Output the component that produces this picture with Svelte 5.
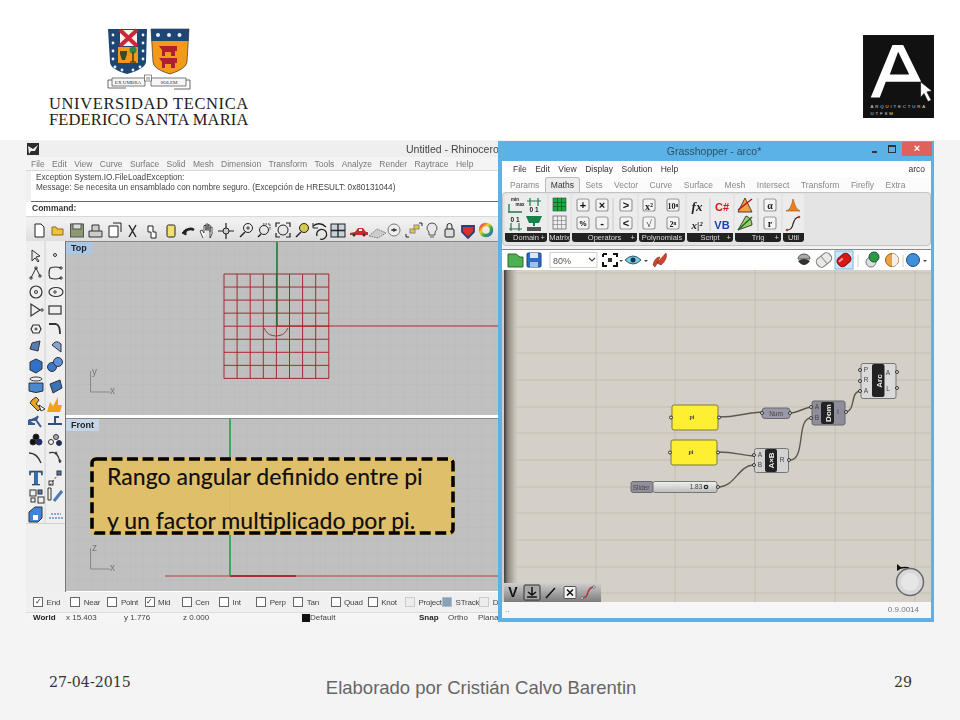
<script>
  const rhinoMenu = ["File", "Edit", "View", "Curve", "Surface", "Solid", "Mesh", "Dimension", "Transform", "Tools", "Analyze", "Render", "Raytrace", "Help"];
  const osnaps = [
    { name: "End", on: true }, { name: "Near" }, { name: "Point" }, { name: "Mid", on: true },
    { name: "Cen" }, { name: "Int" }, { name: "Perp" }, { name: "Tan" }, { name: "Quad" },
    { name: "Knot" }, { name: "Project", flat: true }, { name: "STrack", flat: true, fill: true }, { name: "Disable", flat: true },
  ];
  const ghMenu = ["File", "Edit", "View", "Display", "Solution", "Help"];
  const ghTabs = ["Params", "Maths", "Sets", "Vector", "Curve", "Surface", "Mesh", "Intersect", "Transform", "Firefly", "Extra"];
  const redCells = [0, 1, 2, 3, 4, 5, 6, 7, 8];
  const gridX = [516, 596, 675, 755, 835, 915];
  const gridY = [273, 300, 327, 353, 380, 407, 433, 460, 487, 513, 540, 567, 593];
  const dots = [[113, 35], [113, 43], [113, 51], [113, 59], [115, 67], [122, 70], [133, 70], [140, 67], [143, 59], [143, 51], [143, 43], [143, 35]];
</script>

<div class="page">
  <header class="top">
    <div class="utfsm">
      <svg class="crest" viewBox="105 27 88 64" width="88" height="64">
        <path d="M108 29H147L146 62Q145 69 127 74Q110 69 110 62Z" fill="#1d4674" />
        <path d="M120 30H137V46H120Z" fill="#f6f2ee" />
        <path d="M120 30L137 46M137 30L120 46" stroke="#c8283a" stroke-width="4" />
        <path d="M118 47H138V63H118Z" fill="#ef9a1e" />
        <path d="M120 51H127V54L125 60H122L120 54Z" fill="#3c4a2a" />
        <circle cx="133" cy="50" r="3.5" fill="#2b8a4a" />
        <path d="M133 52V62M130 62H136" stroke="#222" stroke-width="1.2" />
        {#each dots as d}
          <circle cx={d[0]} cy={d[1]} r="1.4" fill="#eef2f5" />
        {/each}
        <path d="M151 29H189L187 62Q186 69 170 74Q153 69 153 62Z" fill="#f29a1c" stroke="#222" stroke-width=".6" />
        <path d="M151 29H189L188.5 41H151.5Z" fill="#1d4674" />
        <circle cx="158" cy="35" r="2" fill="#eef2f5" /><circle cx="169" cy="35" r="2" fill="#eef2f5" /><circle cx="179.500" cy="35" r="2" fill="#eef2f5" />
        <path d="M159 46H177V51H175V56H171V52H165V56H162V50Z" fill="#b0202c" />
        <path d="M159 58H177V63H175V68H171V64H165V68H162V62Z" fill="#b0202c" />
        <path d="M112 78H145V86H112ZM151 78H186V86H151Z" fill="#f7f7f7" stroke="#444" stroke-width=".7" />
        <path d="M112 80H108V88H126M186 80H190V89H174" fill="none" stroke="#444" stroke-width=".8" />
        <rect x="144.500" y="75" width="7" height="6" fill="#fff" stroke="#444" stroke-width=".6" />
        <text x="128" y="83.500" class="motto">EX UMBRA</text>
        <text x="148" y="80" class="motto small">IN</text>
        <text x="169" y="83.500" class="motto">SOLEM</text>
      </svg>
      <div class="name">UNIVERSIDAD TECNICA</div>
      <div class="name second">FEDERICO SANTA MARIA</div>
    </div>
    <svg class="arq" viewBox="40 45 212 248" width="71" height="83">
      <rect x="40" y="45" width="212" height="248" fill="#111" />
      <path fill-rule="evenodd" d="M128 75H160L214 185H108L90 232H63ZM145 95L120 163H178Z" fill="#fff" />
      <path d="M212 185L246 212L231 215L244 240L234 244L222 220L212 232Z" fill="#fff" stroke="#111" stroke-width="2" />
      <text x="62" y="262" class="arqtext">ARQUITECTURA</text>
      <text x="62" y="285" class="arqtext">UTFSM</text>
    </svg>
  </header>

  <main class="stage">
    <section class="rhino">
      <div class="r-title">
        <svg width="12" height="12" viewBox="0 0 12 12" class="r-logo">
          <rect width="12" height="12" fill="#2c2c2c" />
          <path d="M1 3L6 6L11 2L8 8L4 8L2 11Z" fill="#eee" />
        </svg>
        <span>Untitled - Rhinoceros</span>
      </div>
      <nav class="r-menu">
        {#each rhinoMenu as item}<span>{item}</span>{/each}
      </nav>
      <div class="r-msg">
        <div>Exception System.IO.FileLoadException:</div>
        <div>Message: Se necesita un ensamblado con nombre seguro. (Excepción de HRESULT: 0x80131044)</div>
      </div>
      <div class="r-cmd">Command:</div>
      <svg class="r-tools" viewBox="26 219 472 21" width="472" height="21">
        <g fill="none" stroke="#222" stroke-width="1">
          <path d="M35 223H41L44 226V236H35Z" fill="#fff" />
          <path d="M52 234V226H56L57 228H63V234Z" fill="#f2c23c" stroke="#8a6a10" />
          <rect x="70.500" y="223" width="13" height="13" fill="#8c9a70" stroke="#555" />
          <rect x="73" y="223" width="8" height="5" fill="#ddd" stroke="#555" />
          <path d="M89 230H102V236H89ZM92 230V224H99V230" fill="#ccc" stroke="#333" />
          <path d="M109 225H118V236H109Z" fill="#fff" /><path d="M113 222H121V231" />
          <path d="M129 224L136 236M136 224L129 236" stroke-width="1.4" />
          <path d="M148 225H153V231H156V237H151V231H148Z" fill="#fff" />
          <rect x="167" y="224" width="8" height="12" rx="1.500" fill="#f1df70" />
          <path d="M184 231Q189 226 194 229" stroke-width="2.500" /><path d="M182 232L186 228V234Z" fill="#222" />
          <path d="M203 237L200 230L202 229L204 232V224.500H206V230M206 229V223H208V230M208 229V224H210V231M210 230V226H212V233L210 237Z" fill="#fff" stroke-width=".8" />
          <path d="M226 222V238M218 230H234" stroke-width="1.200" /><circle cx="226" cy="230" r="3" fill="#ccc" />
          <circle cx="248" cy="227" r="4.500" /><path d="M245 231L240 236" stroke-width="1.500" /><path d="M246 227H250M248 225V229" stroke-width=".8" />
          <circle cx="264" cy="229" r="4.500" /><path d="M261 233L258 236" stroke-width="1.500" /><path d="M263 223H270V229" stroke-dasharray="1.500 1" />
          <circle cx="283" cy="229" r="5" /><path d="M276 226V222H280M286 222H290V226M276 232V236H280M286 236H290V232" stroke-width="1.200" />
          <circle cx="304" cy="227" r="4.500" fill="#d8c84c" /><path d="M301 231L296 236" stroke-width="1.500" />
          <path d="M313 225Q320 220 326 226M320 238a5 5 0 1 0-3-3" stroke-width="1.300" /><path d="M313 222V227H318" stroke-width="1" />
          <rect x="331" y="223" width="14" height="13" fill="#c8d2dc" /><path d="M338 223V236M331 229.500H345" stroke-width="1.300" />
          <path d="M350 232L355 231L358 227H363L366 231H368V234H350Z" fill="#c82c30" stroke="none" /><rect x="359" y="228" width="3" height="2" fill="#fff" stroke="none" /><circle cx="354" cy="234" r="1.500" fill="#333" stroke="none" /><circle cx="364" cy="234" r="1.500" fill="#333" stroke="none" />
          <path d="M369 235L377 228L386 232L378 237Z" fill="#ccc" stroke="#777" stroke-dasharray="1.500 1" />
          <circle cx="394" cy="229" r="6" stroke="#777" fill="#eee" /><path d="M391 229H397" /><circle cx="394" cy="229" r="1.200" />
          <rect x="410" y="228" width="5" height="4" fill="#e8c82c" stroke="#888" /><rect x="414" y="224" width="5" height="4" fill="#e8c82c" stroke="#888" /><path d="M406 236V233M406 236H409M419 222H422V225" />
          <path d="M432 222a5 5 0 0 1 3 9v3h-6v-3a5 5 0 0 1 3-9Z" fill="#e8e8e8" stroke="#555" /><path d="M430 236H434" stroke="#555" />
          <rect x="445" y="228" width="9" height="8" rx="1" fill="#ddd" /><path d="M447 228V225a2.500 2.500 0 0 1 5 0V228" />
          <path d="M462 225H474V231L468 237L462 231Z" fill="#d6332c" stroke="#2c3e78" stroke-width="1.800" />
        </g>
        <circle cx="486" cy="229" r="5.500" fill="none" stroke="url(#wheel)" stroke-width="3.500" />
        <defs>
          <linearGradient id="wheel" x1="0" y1="0" x2="1" y2="1">
            <stop offset="0" stop-color="#e33" /><stop offset=".35" stop-color="#ec3" /><stop offset=".65" stop-color="#3a4" /><stop offset="1" stop-color="#36c" />
          </linearGradient>
        </defs>
      </svg>

      <div class="r-body">
        <svg class="r-side" viewBox="26 241 39 350" width="39" height="350">
          <path d="M45 241V523M26 523.500H65" stroke="#d2d2d2" />
          <g fill="none" stroke="#333" stroke-width="1">
            <path d="M32 250L32 261L35 258L38 262L39 261L36 257L40 256Z" fill="#e8e8e8" />
            <circle cx="55" cy="255" r="1.500" />
            <path d="M31 278L36 268L40 276" /><circle cx="31" cy="278" r="1.200" /><circle cx="36" cy="268" r="1.200" /><circle cx="40" cy="276" r="1.200" />
            <path d="M50 268Q56 266 61 268M50 268Q48 274 50 278Q55 280 61 278" stroke-width="1.200" /><circle cx="61" cy="268" r="1.200" /><circle cx="61" cy="278" r="1.200" />
            <circle cx="36" cy="292" r="6" stroke-width="1.200" /><circle cx="36" cy="292" r="1.500" />
            <ellipse cx="56" cy="292" rx="7" ry="4.500" stroke-width="1.200" /><circle cx="55" cy="292" r="1.200" />
            <path d="M31 304V316L40 310Z" stroke-width="1.200" /><circle cx="42" cy="310" r="1.200" />
            <rect x="49" y="306" width="12" height="8" stroke-width="1.200" />
            <path d="M31 329L33 325H39L41 329L39 333H33Z" stroke-width="1.200" /><circle cx="36" cy="329" r="1" />
            <path d="M49 324H56Q60 325 60 334" stroke-width="1.800" />
            <path d="M32 343L40 341L38 351L30 349Z" fill="#5a7ab8" />
            <path d="M52 345Q56 339 61 344V352L52 345Z" fill="#8aa4d8" />
            <path d="M30 362L36 359L42 362V369L36 373L30 370Z" fill="#2f72c8" />
            <circle cx="52" cy="367" r="4.500" fill="#3f78c8" /><circle cx="58" cy="362" r="4.500" fill="#5a90da" />
            <ellipse cx="36" cy="379" rx="6" ry="2" /><path d="M29 383H43V391Q36 394 29 391Z" fill="#4a88d2" />
            <path d="M50 384L60 380L62 388L53 393Z" fill="#3a72b8" />
            <path d="M32 400L36 397L39 400L36 404L41 408L38 411L30 403Z" fill="#e8a420" />
            <path d="M39 405L45 409L41 411Z" fill="#fff" />
            <path d="M47 412L50 402L53 406L58 397L58 405L62 405L60 412Z" fill="#f2a21a" stroke="none" />
            <path d="M29 420H36L38 416M36 420L41 427M29 420V424H35" fill="#3a5a8c" stroke="#3a5a8c" stroke-width="2" />
            <path d="M48 424H62M55 424V417L59 417" fill="none" stroke="#2f4f80" stroke-width="2" />
            <circle cx="36" cy="437" r="3" fill="#111" /><circle cx="33" cy="442" r="3" fill="#111" /><circle cx="39" cy="442" r="3" fill="#1c2a80" />
            <circle cx="51" cy="442" r="2.500" /><circle cx="56" cy="437" r="2.500" fill="#aab" /><circle cx="59" cy="443" r="2.500" fill="#1c2a80" />
            <path d="M29 453Q37 453 41 463" stroke-width="1.300" />
            <path d="M49 453Q58 450 60 463" stroke-width="1.300" /><circle cx="56" cy="453" r="1" /><circle cx="60" cy="461" r="1" />
            <text x="36" y="485" class="bigt">T</text>
            <path d="M50 485L60 472" stroke-dasharray="2 2" /><rect x="49" y="481" width="4" height="4" /><rect x="57" y="471" width="4" height="4" fill="#4a78b8" />
            <rect x="30" y="490" width="6" height="6" /><rect x="38" y="490" width="4" height="4" fill="#4a78b8" /><rect x="31" y="498" width="4" height="4" /><rect x="38" y="497" width="6" height="6" />
            <path d="M48 488V500H51V488Z" /><path d="M54 501L62 491" stroke="#4a78b8" stroke-width="3" />
            <path d="M29 512L35 507H42V518L38 522H29Z" fill="#3f86d8" /><path d="M33 515H38V520H33Z" fill="#fff" stroke="none" />
            <path d="M49 518H63M51 514H61" stroke="#2f5fa8" stroke-dasharray="2 1" stroke-width="1.200" />
          </g>
        </svg>

        <div class="views">
          <div class="view">
            <span class="tag">Top</span>
            <svg viewBox="66 241 432 174" width="432" height="174">
              <defs>
                <pattern id="fine" x="66" y="241" width="13" height="13" patternUnits="userSpaceOnUse">
                  <path d="M13 0V13H0" fill="none" stroke="#b6b6b6" stroke-width=".6" />
                </pattern>
              </defs>
              <rect x="66" y="241" width="432" height="174" fill="url(#fine)" />
              <g stroke="#a8282e" stroke-width="1">
                {#each redCells as n}
                  <path d="M{224 + n * 13.100} 273V377.500" />
                  <path d="M224 {273 + n * 13.050}H329" />
                {/each}
              </g>
              <path d="M264 327A13 13 0 0 0 288 327" fill="none" stroke="#a33a40" />
              <path d="M329 325H498" stroke="#b0282c" />
              <path d="M277 241V325" stroke="#0c7a30" stroke-width="1.500" />
              <path d="M277 325H329" stroke="#b81c20" stroke-width="1.200" />
              <path d="M90.500 370V391H110" fill="none" stroke="#888" />
              <text x="92" y="374" class="axis">y</text>
              <text x="110" y="393" class="axis">x</text>
            </svg>
          </div>
          <div class="view front">
            <span class="tag">Front</span>
            <svg viewBox="66 418 432 173" width="432" height="173">
              <rect x="66" y="418" width="432" height="173" fill="url(#fine)" />
              <path d="M165 575H498" stroke="#b83a3c" stroke-width="1.200" />
              <path d="M230 575H296" stroke="#a81414" stroke-width="1.400" />
              <path d="M230 418V575" stroke="#1f9a45" stroke-width="1.500" />
              <path d="M90.500 547V568H110" fill="none" stroke="#888" />
              <text x="92" y="550" class="axis">z</text>
              <text x="110" y="570" class="axis">x</text>
            </svg>
          </div>
        </div>
      </div>

      <div class="r-snap">
        {#each osnaps as s}
          <label class="snap">
            <span class="box" class:flat={s.flat} class:fill={s.fill}>{s.on ? "✓" : ""}</span>{s.name}
          </label>
        {/each}
      </div>
      <div class="r-status">
        <b class="world">World</b>
        <span class="c1">x 15.403</span>
        <span class="c2">y 1.776</span>
        <span class="c3">z 0.000</span>
        <i class="swatch"></i><span class="def">Default</span>
        <b class="snapb">Snap</b>
        <span class="ortho">Ortho</span>
        <span class="ortho">Planar</span>
      </div>

      <div class="callout">
        <svg class="dash" width="365" height="78" viewBox="0 0 365 78">
          <rect x="2" y="2" width="361" height="74" rx="4" />
        </svg>
        <p>Rango angular definido entre pi</p>
        <p>y un factor multiplicado por pi.</p>
      </div>
    </section>

    <section class="gh">
      <div class="g-title">
        <span>Grasshopper - arco*</span>
        <div class="winbtns">
          <i class="wmin"></i><i class="wmax"></i><i class="wclose">×</i>
        </div>
      </div>
      <div class="g-inner">
        <nav class="g-menu">
          {#each ghMenu as item}<span>{item}</span>{/each}
          <span class="g-doc">arco</span>
        </nav>
        <div class="g-tabs">
          {#each ghTabs as tab}<span class:active={tab === "Maths"}>{tab}</span>{/each}
        </div>
        <div class="ribbon">
          <div class="grp" style="width:42px">
            <svg viewBox="504 194 42 39" width="42" height="39" class="ic">
              <text x="514" y="201" class="mini">min</text><text x="519" y="206" class="mini">max</text>
              <path d="M507 212H521M508 204V212" stroke="#1d7a4a" stroke-width="1.300" fill="none" />
              <path d="M526 201H540M529 198V206M537 198V206" stroke="#1d7a4a" stroke-width="1.200" fill="none" /><text x="533" y="212" class="digits">0 1</text>
              <text x="514" y="222" class="digits">0 1</text><path d="M508 229H521M510 223V231M518 223V231" stroke="#1d7a4a" stroke-width="1.200" fill="none" />
              <path d="M525 216H541L538 223H534V226H532V223H528Z" fill="#14834a" /><rect x="526" y="227" width="14" height="4" fill="#555" />
            </svg>
            <b>Domain<em>+</em></b>
          </div>
          <div class="grp" style="width:21px">
            <svg viewBox="547 194 21 39" width="21" height="39" class="ic">
              <rect x="551" y="198" width="13" height="13" fill="#1fa83c" stroke="#155" stroke-width=".6" />
              <path d="M551 202.500H564M551 206.500H564M555.500 198V211M559.500 198V211" stroke="#0c5a24" stroke-width=".7" />
              <rect x="551" y="216" width="13" height="13" fill="#eee" stroke="#555" stroke-width=".7" />
              <path d="M551 220.500H564M551 224.500H564M555.500 216V229M559.500 216V229" stroke="#777" stroke-width=".6" />
            </svg>
            <b>Matrix</b>
          </div>
          <div class="grp" style="width:65px">
            <svg viewBox="571 194 65 39" width="65" height="39" class="ic">
              <rect class="btn" x="576" y="199" width="12" height="12" /><text class="op" x="582" y="209">+</text>
              <rect class="btn" x="595" y="199" width="12" height="12" /><text class="op" x="601" y="209">×</text>
              <rect class="btn" x="619" y="199" width="12" height="12" /><text class="op" x="625" y="209">&gt;</text>
              <rect class="btn" x="576" y="217" width="12" height="12" /><text class="op sm" x="582" y="226">%</text>
              <rect class="btn" x="595" y="217" width="12" height="12" /><text class="op" x="601" y="226.500">-</text>
              <rect class="btn" x="619" y="217" width="12" height="12" /><text class="op" x="625" y="227">&lt;</text>
              <path d="M612 198V231" stroke="#c8c8c8" />
            </svg>
            <b>Operators<em>+</em></b>
          </div>
          <div class="grp" style="width:46px">
            <svg viewBox="640 194 46 39" width="46" height="39" class="ic">
              <rect class="btn" x="644" y="199" width="12" height="12" /><text class="mth" x="650" y="209.500">x²</text>
              <rect class="btn" x="668" y="199" width="12" height="12" /><text class="mth sm" x="674" y="208.500">10ⁿ</text>
              <rect class="btn" x="644" y="217" width="12" height="12" /><text class="mth" x="650" y="227">√</text>
              <rect class="btn" x="668" y="217" width="12" height="12" /><text class="mth sm" x="674" y="226.500">2ⁿ</text>
            </svg>
            <b>Polynomials</b>
          </div>
          <div class="grp" style="width:46px">
            <svg viewBox="689 194 46 39" width="46" height="39" class="ic">
              <text class="fx" x="699" y="211">fx</text>
              <text class="fx sm" x="699" y="229">x|²</text>
              <text class="cs" x="724" y="211">C#</text>
              <text class="vb" x="724" y="229">VB</text>
              <path d="M712 198V231" stroke="#c8c8c8" />
            </svg>
            <b>Script<em>+</em></b>
          </div>
          <div class="grp" style="width:46px">
            <svg viewBox="738 194 46 39" width="46" height="39" class="ic">
              <path d="M741 212L748 198L755 212Z" fill="#f2a23c" stroke="#222" stroke-width=".8" /><path d="M741 210L755 199" stroke="#b8141c" stroke-width="1.500" />
              <path d="M741 230L755 225Q755 218 749 216Z" fill="#9ccf6a" stroke="#222" stroke-width=".8" /><path d="M741 230L755 217" stroke="#1a6a2a" stroke-width="1.500" />
              <rect class="btn" x="767" y="199" width="12" height="12" /><text class="mth" x="773" y="209">α</text>
              <rect class="btn" x="767" y="217" width="12" height="12" /><text class="mth" x="773" y="227">r</text>
              <path d="M761 198V231" stroke="#c8c8c8" />
            </svg>
            <b>Trig<em>+</em></b>
          </div>
          <div class="grp" style="width:21px">
            <svg viewBox="787 194 21 39" width="21" height="39" class="ic">
              <path d="M790 211Q795 210 797 199Q800 210 804 211Z" fill="#e8821c" stroke="#a0501a" stroke-width=".6" />
              <path d="M791 230Q796 230 797 224Q799 217 803 217" fill="none" stroke="#222" stroke-width="1.200" />
              <circle cx="803" cy="217" r="1.300" fill="#c33" /><circle cx="791" cy="230" r="1.300" fill="#c33" />
            </svg>
            <b>Util</b>
          </div>
        </div>
        <div class="g-tools">
          <svg viewBox="502 250 429 20" width="429" height="20">
            <path d="M508 267V254H516L520 257H523V267Z" fill="#4eb04e" stroke="#2a6a2a" />
            <rect x="527" y="253" width="14" height="14" rx="1" fill="#2c6cc4" stroke="#1a3f80" />
            <rect x="530" y="253" width="8" height="5" fill="#dfe8f2" /><rect x="530" y="262" width="8" height="5" fill="#9fc0e8" />
            <rect x="550" y="252.500" width="47" height="15" fill="#fff" stroke="#d0d0d0" />
            <text x="553" y="263.500" class="combo">80%</text>
            <path d="M589 258L592 261L595 258" fill="none" stroke="#444" stroke-width="1.200" />
            <path d="M603 254H607M613 254H617V257M617 262V266H613M607 266H603V262M603 257V254" stroke="#111" stroke-width="2" fill="none" />
            <rect x="608" y="258" width="4" height="4" fill="#333" />
            <path d="M619.500 260H623L621 262Z" fill="#444" />
            <path d="M625 260Q633 252 641 260Q633 268 625 260Z" fill="#7fd0d8" stroke="#2a5a6a" /><circle cx="633" cy="260" r="2.500" fill="#136" />
            <path d="M644 260H648L646 262Z" fill="#444" />
            <path d="M653 265Q655 257 660 257Q657 264 655 267ZM657 263L666 253Q668 259 661 265Z" fill="#d8402c" stroke="#7a2a1a" stroke-width=".6" />
            <path d="M798 259a6 5 0 1 1 12 0Z" fill="#aaa" stroke="#555" /><path d="M798 261Q804 257 810 261Q804 269 798 261Z" fill="#333" />
            <g transform="rotate(-40 824 260)"><rect x="816" y="255" width="16" height="10" rx="4" fill="#e8e8e8" stroke="#777" /><path d="M824 255V265" stroke="#999" /></g>
            <rect x="835" y="251" width="18" height="18" fill="#cde6f7" stroke="#7ab8e2" />
            <g transform="rotate(-40 844 260)"><rect x="837" y="255" width="14" height="10" rx="4" fill="#d81818" stroke="#7a1010" /><rect x="839" y="257" width="5" height="2" fill="#f9a" /></g>
            <path d="M858 255V267" stroke="#ccc" />
            <circle cx="871" cy="262" r="5" fill="#ddd" stroke="#777" /><circle cx="874" cy="257" r="5" fill="#2f9a3c" stroke="#155" />
            <circle cx="892" cy="260" r="6.500" fill="#f2a23c" stroke="#9a5a1a" /><path d="M892 253.500a6.500 6.500 0 0 1 0 13Z" fill="#f4f0e8" />
            <path d="M903 255V267" stroke="#ccc" />
            <circle cx="913" cy="260" r="6.500" fill="#3f8ed8" stroke="#234a80" />
            <path d="M923 260H927L925 262Z" fill="#444" />
          </svg>
        </div>
        <div class="canvas">
          <svg viewBox="502 270 429 332" width="429" height="332">
            <defs>
              <linearGradient id="rail"><stop offset="0" stop-color="#3c3c3a" /><stop offset=".35" stop-color="#8c8880" /><stop offset="1" stop-color="#c8c3b9" /></linearGradient>
              <linearGradient id="sl" x2="0" y2="1"><stop offset="0" stop-color="#f0f0f0" /><stop offset="1" stop-color="#bdbdbd" /></linearGradient>
              <linearGradient id="bar" x2="0" y2="1"><stop offset="0" stop-color="#cfcfcf" /><stop offset="1" stop-color="#7c7c7c" /></linearGradient>
            </defs>
            <rect x="504" y="270" width="11" height="313" fill="url(#rail)" />
            <g stroke="#c2bdb3" stroke-width="1">
              {#each gridX as x}<path d="M{x} 270V602" />{/each}
              {#each gridY as y}<path d="M516 {y}H931" />{/each}
            </g>
            <g fill="none" stroke="#5c584f" stroke-width="1.400">
              <path d="M719 417C740 417 740 413 762 412" />
              <path d="M790 413C798 413 803 408 811 407" />
              <path d="M718 452C735 452 740 455 754 456" />
              <path d="M718 487C735 487 738 466 753 465" />
              <path d="M790 460C806 460 796 418 811 418" />
              <path d="M846 412C856 410 850 392 860 391" />
            </g>
            <g class="node">
              <rect x="672" y="405" width="46" height="25" rx="2" fill="#fdf033" stroke="#7c7a3c" />
              <text x="692" y="419" class="pi">pi</text>
              <rect x="671" y="440" width="46" height="25" rx="2" fill="#fdf033" stroke="#7c7a3c" />
              <text x="691" y="454" class="pi">pi</text>
              <rect x="631" y="481.500" width="22" height="11" rx="2" fill="#908f9a" stroke="#6a6a70" />
              <text x="641" y="489.500" class="lbl">Slider</text>
              <rect x="653" y="481.500" width="64" height="11" rx="2" fill="url(#sl)" stroke="#777" />
              <text x="696" y="488.500" class="lbl">1.83</text><circle cx="706" cy="487" r="1.700" fill="none" stroke="#222" stroke-width="1.200" />
              <rect x="762" y="408" width="28" height="10.500" rx="3" fill="#9a98a8" stroke="#6a6a70" />
              <text x="776" y="415.500" class="lbl">Num</text>
              <rect x="754.500" y="448.500" width="34" height="24" rx="2" fill="#d2d2d2" stroke="#777" />
              <rect x="765" y="449" width="12" height="23" rx="2" fill="#222" />
              <text class="vert" transform="translate(774 460.500) rotate(-90)">A×B</text>
              <text x="760" y="457" class="lbl">A</text><text x="760" y="467" class="lbl">B</text><text x="782" y="462" class="lbl">R</text>
              <rect x="812" y="401" width="33" height="24" rx="2" fill="#8f8d9a" stroke="#666" />
              <rect x="821" y="402" width="13" height="22" rx="2" fill="#222" />
              <text class="vert" transform="translate(831 413) rotate(-90)">Dom</text>
              <text x="817" y="409" class="lbl">A</text><text x="817" y="420" class="lbl">B</text><text x="838" y="414" class="lbl">I</text>
              <rect x="861" y="363.500" width="35" height="35" rx="2" fill="#dadada" stroke="#777" />
              <rect x="872" y="364" width="12.500" height="33" rx="2" fill="#222" />
              <text class="vert" transform="translate(881.500 381) rotate(-90)">Arc</text>
              <text x="866" y="372" class="lbl">P</text><text x="866" y="382" class="lbl">R</text><text x="866" y="393" class="lbl">A</text><text x="888" y="375" class="lbl">A</text><text x="888" y="391" class="lbl">L</text>
            </g>
            <g fill="#e6e6e0" stroke="#333" stroke-width="1">
              <circle cx="671" cy="417.500" r="1.500" /><circle cx="719" cy="417.500" r="1.500" />
              <circle cx="670" cy="452.500" r="1.500" /><circle cx="718" cy="452.500" r="1.500" />
              <circle cx="718" cy="487" r="1.500" />
              <circle cx="762" cy="413" r="1.500" /><circle cx="790" cy="413" r="1.500" />
              <circle cx="754" cy="455" r="1.500" /><circle cx="754" cy="465" r="1.500" /><circle cx="789" cy="460" r="1.500" />
              <circle cx="811" cy="407" r="1.500" /><circle cx="811" cy="418" r="1.500" /><circle cx="846" cy="412" r="1.500" />
              <circle cx="860" cy="370" r="1.500" /><circle cx="860" cy="381" r="1.500" /><circle cx="860" cy="391" r="1.500" />
              <circle cx="897" cy="372" r="1.500" /><circle cx="897" cy="388" r="1.500" />
            </g>
            <path d="M900 568Q905 567 909 568" fill="none" stroke="#111" stroke-width="1.500" />
            <path d="M897 564L902 568L897 571Z" fill="#111" />
            <circle cx="910" cy="582" r="13.500" fill="#d8d8d8" stroke="#6a6a6a" stroke-width="1.500" />
            <circle cx="910" cy="582" r="9" fill="#e6e6e6" />
            <rect x="504" y="583" width="97" height="19" fill="url(#bar)" />
            <text x="513" y="597" class="vv">V</text>
            <rect x="524" y="585" width="16" height="15" rx="1" fill="#a8a8a8" stroke="#333" />
            <path d="M532 587V594M528 592L532 595L536 592M527 597H537" fill="none" stroke="#111" stroke-width="1.500" />
            <path d="M546 598L555 588" stroke="#111" stroke-width="1.500" />
            <rect x="564" y="586.500" width="12" height="12" rx="1" fill="#f2f2f2" stroke="#555" />
            <path d="M567 589.500L573 595.500M573 589.500L567 595.500" stroke="#111" stroke-width="1.500" />
            <path d="M582 598Q587 598 588 592Q590 587 594 587" fill="none" stroke="#b03040" stroke-width="1.500" />
            <circle cx="594" cy="587" r="1.300" fill="#eee" stroke="#333" stroke-width=".5" /><circle cx="582" cy="598" r="1.300" fill="#eee" stroke="#333" stroke-width=".5" />
          </svg>
        </div>
        <div class="g-status">
          <span class="grip">..</span>
          <span>0.9.0014</span>
        </div>
      </div>
    </section>
  </main>

  <footer class="foot">
    <span class="date">27-04-2015</span>
    <span class="author">Elaborado por Cristián Calvo Barentin</span>
    <span class="num">29</span>
  </footer>
</div>

<style>
  :global(body) {
    margin: 0;
    background: #f4f4f4;
  }

  .page {
    width: 960px;
    height: 720px;
    overflow: hidden;
    background: #f4f4f4;
    display: flex;
    flex-direction: column;
    font-family: "Liberation Sans", Arial, sans-serif;
  }

  .top {
    height: 140px;
    flex: none;
    background: #fff;
    display: flex;
    justify-content: space-between;
    padding: 27px 26px 0 49px;
    box-sizing: border-box;
  }

  .utfsm {
    width: 210px;
    color: #1c1c1c;
  }

  .crest {
    display: block;
    margin-left: 56px;
  }

  .motto {
    font: 5px "Liberation Serif", serif;
    text-anchor: middle;
    fill: #333;
  }

  .small {
    font-size: 4px;
  }

  .name {
    font: 16.5px/16px "Liberation Serif", serif;
    letter-spacing: 0.62px;
    white-space: nowrap;
    margin-top: 5px;
  }

  .second {
    margin-top: 0;
    letter-spacing: 0.14px;
  }

  .arq {
    margin-top: 8px;
  }

  .arqtext {
    font: 13px "Liberation Sans", sans-serif;
    letter-spacing: 5.6px;
    fill: #ddd;
  }

  .stage {
    display: flex;
    height: 481px;
    flex: none;
    margin: 1px 0 0 26px;
  }

  .rhino {
    position: relative;
    width: 472px;
    flex: none;
    background: #f0f0f0;
    display: flex;
    flex-direction: column;
    overflow: hidden;
    font-size: 8.2px;
    color: #333;
  }

  .rhino > :not(.callout),
  .gh > * {
    filter: blur(0.3px);
  }

  .r-title {
    height: 16px;
    flex: none;
    display: flex;
    align-items: center;
    background: #efefef;
    font-size: 10.5px;
    color: #444;
    white-space: nowrap;
  }

  .r-logo {
    margin-left: 1px;
    flex: none;
  }

  .r-title span {
    margin-left: 367px;
  }

  .r-menu {
    height: 14px;
    flex: none;
    display: flex;
    align-items: center;
    gap: 7.4px;
    padding-left: 5px;
    font-size: 8.5px;
    color: #777;
    background: #f4f4f4;
    border-bottom: 1px solid #d8d8d8;
    box-sizing: border-box;
  }

  .r-msg {
    height: 31px;
    flex: none;
    background: #fff;
    box-sizing: border-box;
    padding: 2px 0 0 5px;
    line-height: 10px;
    color: #444;
    border-bottom: 1px solid #666;
    margin-left: 5px;
  }

  .r-cmd {
    height: 15px;
    flex: none;
    background: #fff;
    font-weight: 700;
    font-size: 8.5px;
    padding-left: 6px;
    line-height: 13px;
    border-bottom: 1px solid #d8d8d8;
    box-sizing: border-box;
    margin-bottom: 3px;
  }

  .r-tools {
    display: block;
    flex: none;
    background: linear-gradient(#f2f2f2, #dedede);
  }

  .r-body {
    display: flex;
    height: 351px;
    flex: none;
  }

  .r-side {
    flex: none;
    display: block;
    background: #efefef;
  }

  .bigt {
    font: 700 20px "Liberation Serif", serif;
    fill: #2a6fc0;
    stroke: #123;
    stroke-width: 0.5;
    text-anchor: middle;
  }

  .views {
    width: 433px;
    border-left: 1px solid #777;
    background: #fff;
    display: flex;
    flex-direction: column;
    gap: 3px;
  }

  .view {
    position: relative;
    height: 174px;
    background: #c0c0c0;
    border-top: 1px solid #888;
    box-sizing: border-box;
    overflow: hidden;
  }

  .view svg {
    display: block;
  }

  .front {
    height: 173px;
  }

  .tag {
    position: absolute;
    left: 0;
    top: 0;
    height: 12px;
    line-height: 12px;
    padding: 0 5px;
    background: #a9c8e6;
    font-weight: 700;
    font-size: 9px;
    color: #222;
  }

  .front .tag {
    background: #c4d6e6;
  }

  .axis {
    font: 10px "Liberation Sans", sans-serif;
    fill: #777;
  }

  .r-snap {
    height: 20px;
    flex: none;
    display: flex;
    padding-left: 7px;
    align-items: center;
    background: #f0f0f0;
    white-space: nowrap;
  }

  .snap {
    width: 37.2px;
    flex: none;
    display: flex;
    align-items: center;
    gap: 3.5px;
    color: #444;
    font-size: 8px;
    letter-spacing: -0.2px;
  }

  .box {
    width: 8px;
    height: 8px;
    border: 1px solid #666;
    background: #fff;
    font-size: 8px;
    line-height: 8px;
    text-align: center;
    color: #222;
    flex: none;
    letter-spacing: 0;
  }

  .flat {
    border-color: #ccc;
    background: #ececec;
  }

  .fill {
    background: #8aa2b4;
    border-color: #a4c0d8;
  }

  .r-status {
    height: 11px;
    flex: none;
    display: flex;
    align-items: flex-start;
    background: #f5f5f5;
    color: #444;
    border-top: 1px solid #ddd;
    white-space: nowrap;
    line-height: 10px;
    font-size: 8px;
  }

  .r-status > * {
    flex: none;
  }

  .world {
    margin-left: 7px;
    width: 33px;
    color: #222;
  }

  .c1 {
    width: 58px;
  }

  .c2 {
    width: 59px;
  }

  .c3 {
    width: 119px;
  }

  .swatch {
    width: 8px;
    height: 8px;
    margin-top: 1px;
    background: #111;
  }

  .def {
    width: 109px;
  }

  .snapb {
    width: 29px;
    color: #222;
  }

  .ortho {
    width: 30px;
  }

  .callout {
    position: absolute;
    left: 64px;
    top: 316px;
    width: 365px;
    height: 78px;
    box-sizing: border-box;
    border-radius: 5px;
    background: rgba(226, 190, 100, 0.93);
    padding: 3px 0 0 17px;
    display: flex;
    flex-direction: column;
    gap: 12px;
    font: 500 23px/32px Lato, "Open Sans", sans-serif;
    color: #111;
    white-space: nowrap;
  }

  .callout p {
    margin: 0;
  }

  .dash {
    position: absolute;
    left: 0;
    top: 0;
  }

  .dash rect {
    fill: none;
    stroke: #000;
    stroke-width: 3.5;
    stroke-dasharray: 11 4.5;
  }

  .gh {
    width: 436px;
    flex: none;
    background: #5ab2e6;
    display: flex;
    flex-direction: column;
    border-bottom: 4px solid #5ab2e6;
    box-sizing: border-box;
  }

  .g-title {
    position: relative;
    height: 20px;
    flex: none;
    display: flex;
    align-items: center;
    justify-content: center;
    font-size: 10.5px;
    color: #2f4f66;
  }

  .g-title > span {
    margin-right: 4px;
  }

  .winbtns {
    position: absolute;
    right: 2px;
    top: 1px;
    display: flex;
    align-items: flex-start;
  }

  .wmin {
    width: 5px;
    height: 2px;
    background: #333;
    margin: 9px 11px 0 0;
  }

  .wmax {
    width: 6px;
    height: 5px;
    border: 1px solid #333;
    border-top-width: 2px;
    margin: 3px 6px 0 0;
  }

  .wclose {
    width: 30px;
    height: 14px;
    background: #e0605c;
    color: #fff;
    text-align: center;
    font: 700 11px/13px "Liberation Sans", sans-serif;
  }

  .g-inner {
    flex: 1;
    min-height: 0;
    margin: 0 3px 0 4px;
    display: flex;
    flex-direction: column;
    background: #f2f2f2;
    font-size: 8.5px;
    color: #333;
  }

  .g-menu {
    height: 16px;
    flex: none;
    background: #fff;
    display: flex;
    align-items: center;
    gap: 8.5px;
    padding: 0 6px 0 11px;
  }

  .g-doc {
    margin-left: auto;
  }

  .g-tabs {
    height: 15px;
    flex: none;
    display: flex;
    align-items: flex-end;
    gap: 11.5px;
    padding-left: 8px;
    background: #fbfbfb;
    color: #888;
  }

  .g-tabs span {
    height: 14px;
    line-height: 14px;
  }

  .g-tabs .active {
    color: #333;
    background: #ececec;
    border: 1px solid #bbb;
    border-bottom: none;
    border-radius: 3px 3px 0 0;
    padding: 0 5px;
    margin: 0 -6px;
  }

  .ribbon {
    height: 54px;
    flex: none;
    display: flex;
    padding: 1px 0 0 2px;
    gap: 2px;
    margin-bottom: 3px;
    box-sizing: border-box;
    background: #e4e4e4;
    border: 1px solid #c4c4c4;
    border-radius: 4px;
  }

  .grp {
    height: 48px;
    flex: none;
    background: #ececec;
    border-radius: 3px;
    overflow: hidden;
    display: flex;
    flex-direction: column;
  }

  .ic {
    display: block;
    flex: none;
  }

  .grp b {
    position: relative;
    flex: 1;
    background: #222;
    color: #ddd;
    font: 7.5px/9px "Liberation Sans", sans-serif;
    text-align: center;
    white-space: nowrap;
  }

  .grp em {
    position: absolute;
    right: 2px;
    font-style: normal;
  }

  .btn {
    fill: #f4f4f4;
    stroke: #9a9a9a;
    stroke-width: 1.2;
    rx: 2px;
  }

  .op {
    font: 700 11px "Liberation Sans", sans-serif;
    text-anchor: middle;
    fill: #111;
  }

  .op.sm {
    font-size: 8px;
  }

  .mth {
    font: 700 10px "Liberation Serif", serif;
    text-anchor: middle;
    fill: #222;
  }

  .mth.sm {
    font-size: 8px;
  }

  .fx {
    font: italic 700 13px "Liberation Serif", serif;
    text-anchor: middle;
    fill: #222;
  }

  .fx.sm {
    font-size: 11px;
  }

  .cs {
    font: 700 11px "Liberation Sans", sans-serif;
    text-anchor: middle;
    fill: #d8141c;
  }

  .vb {
    font: 700 11px "Liberation Sans", sans-serif;
    text-anchor: middle;
    fill: #1c3cb8;
  }

  .mini {
    font: 700 4.5px "Liberation Sans", sans-serif;
    text-anchor: middle;
    fill: #222;
  }

  .digits {
    font: 700 6.5px "Liberation Sans", sans-serif;
    text-anchor: middle;
    fill: #222;
  }

  .g-tools {
    height: 21px;
    flex: none;
    background: #fff;
    border-top: 1px solid #8a8a8a;
    box-sizing: border-box;
  }

  .g-tools svg {
    display: block;
  }

  .canvas {
    height: 332px;
    flex: none;
    background: #d5d0c7;
    overflow: hidden;
  }

  .canvas svg {
    display: block;
  }

  .combo {
    font: 9px "Liberation Sans", sans-serif;
    fill: #555;
  }

  .pi {
    font: 700 6px "Liberation Serif", serif;
    text-anchor: middle;
    fill: #444;
  }

  .lbl {
    font: 6.5px "Liberation Sans", sans-serif;
    text-anchor: middle;
    fill: #444;
  }

  .vert {
    font: 700 8px "Liberation Sans", sans-serif;
    text-anchor: middle;
    fill: #eee;
  }

  .vv {
    font: 700 14px "Liberation Sans", sans-serif;
    text-anchor: middle;
    fill: #111;
  }

  .g-status {
    flex: 1;
    display: flex;
    justify-content: space-between;
    background: #f6f6f6;
    padding: 3px 12px 0 3px;
    font-size: 8px;
    color: #777;
  }

  .foot {
    flex: 1;
    display: flex;
    padding: 0 48px 0 49px;
    color: #333;
  }

  .date,
  .num {
    font: 14.2px/16px "DejaVu Serif", serif;
    margin-top: 52px;
  }

  .author {
    margin: 55px 0 0 195px;
    font-size: 18.5px;
    line-height: 22px;
    color: #666;
  }

  .num {
    margin-left: auto;
  }
</style>
